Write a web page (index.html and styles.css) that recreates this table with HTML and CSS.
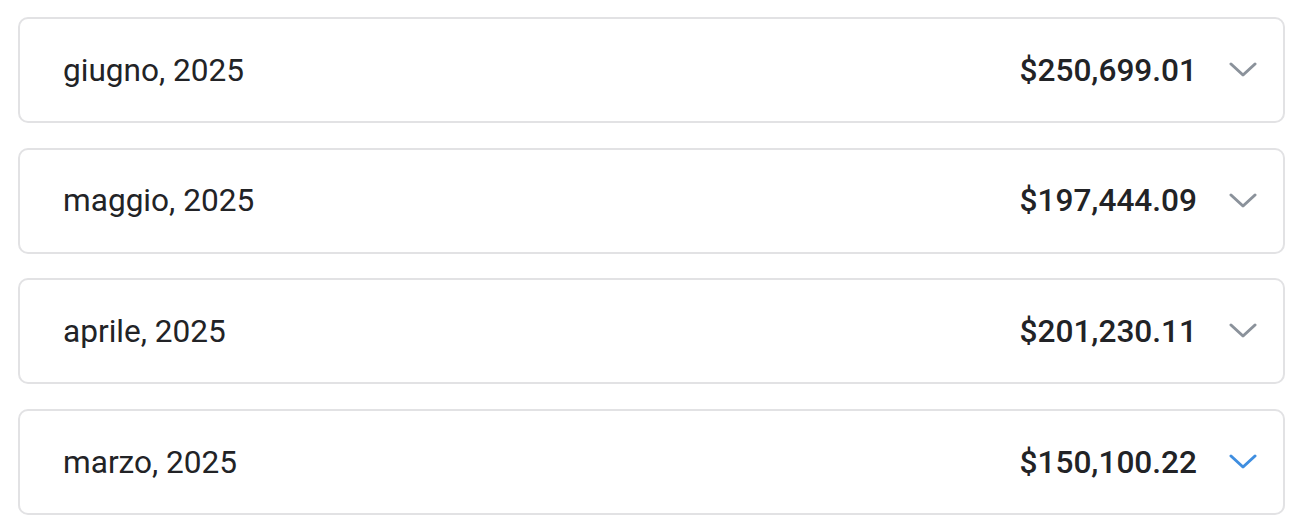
FILE: index.html
```html
<!DOCTYPE html>
<html lang="it">
<head>
<meta charset="utf-8">
<link rel="stylesheet" href="styles.css">
</head>
<body>
<div class="list">
  <div class="card">
    <span class="month">giugno, 2025</span>
    <div class="right">
      <span class="amount">$250,699.01</span>
      <svg class="chev" viewBox="0 0 28 16"><path d="M2 2 L14 13 L26 2" /></svg>
    </div>
  </div>
  <div class="card">
    <span class="month">maggio, 2025</span>
    <div class="right">
      <span class="amount">$197,444.09</span>
      <svg class="chev" viewBox="0 0 28 16"><path d="M2 2 L14 13 L26 2" /></svg>
    </div>
  </div>
  <div class="card">
    <span class="month">aprile, 2025</span>
    <div class="right">
      <span class="amount">$201,230.11</span>
      <svg class="chev" viewBox="0 0 28 16"><path d="M2 2 L14 13 L26 2" /></svg>
    </div>
  </div>
  <div class="card">
    <span class="month">marzo, 2025</span>
    <div class="right">
      <span class="amount">$150,100.22</span>
      <svg class="chev active" viewBox="0 0 28 16"><path d="M2 2 L14 13 L26 2" /></svg>
    </div>
  </div>
</div>
</body>
</html>
```
FILE: styles.css
```css
html, body {
  margin: 0;
  padding: 0;
  background: #fff;
}
body {
  font-family: Roboto, "Liberation Sans", sans-serif;
  color: #222326;
}
.list {
  display: flex;
  flex-direction: column;
  gap: 24.7px;
  padding: 17px 15px 0 18px;
}
.card {
  box-sizing: border-box;
  height: 106px;
  border: 2px solid #e2e2e4;
  border-radius: 10px;
  display: flex;
  align-items: center;
  justify-content: space-between;
  padding: 0 26px 0 43px;
}
.month {
  font-size: 31.6px;
  font-weight: 400;
}
.right {
  display: flex;
  align-items: center;
  gap: 32px;
}
.amount {
  font-size: 31.6px;
  font-weight: 500;
}
.chev {
  width: 28px;
  height: 16px;
  fill: none;
  stroke: #8b929b;
  stroke-width: 3;
  stroke-linecap: round;
  stroke-linejoin: round;
}
.chev.active {
  stroke: #3f8ee0;
}
```
